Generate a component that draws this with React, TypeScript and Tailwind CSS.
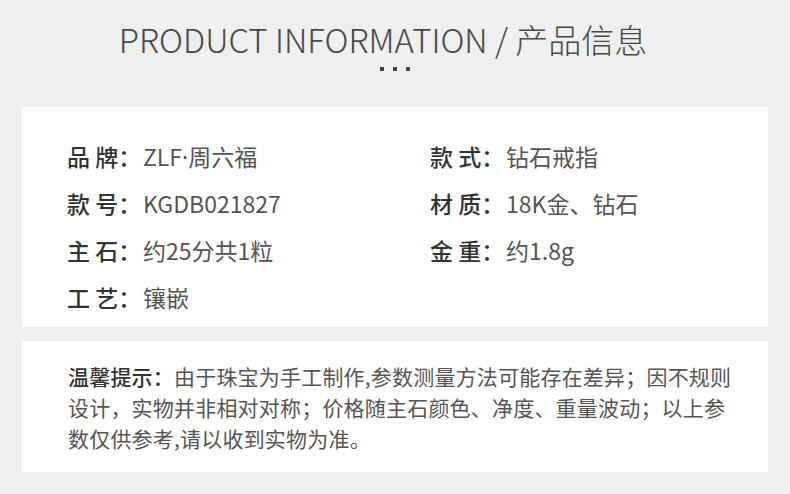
const specs = [
  [
    { label: "品 牌：", value: "ZLF·周六福" },
    { label: "款 式：", value: "钻石戒指" },
  ],
  [
    { label: "款 号：", value: "KGDB021827" },
    { label: "材 质：", value: "18K金、钻石" },
  ],
  [
    { label: "主 石：", value: "约25分共1粒" },
    { label: "金 重：", value: "约1.8g" },
  ],
  [{ label: "工 艺：", value: "镶嵌" }],
];

function Spec({ label, value }: { label: string; value: string }) {
  // the middle dot needs a Latin face, the CJK one draws it full width
  const parts = value.split("·");
  return (
    <div className="flex items-center h-[47px]">
      <span className="w-[76px] shrink-0 whitespace-pre font-medium text-[#333333]">{label}</span>
      <span className="text-[#555555]">
        {parts[0]}
        {parts.length > 1 && (
          <>
            <span style={{ fontFamily: '"Noto Sans", sans-serif' }}>·</span>
            {parts[1]}
          </>
        )}
      </span>
    </div>
  );
}

export default function App() {
  return (
    <div
      lang="zh-CN"
      className="w-[790px] h-[494px] bg-[#efefef] overflow-hidden"
      style={{ fontFamily: '"Noto Sans CJK SC", "Noto Sans", sans-serif' }}
    >
      {/* Heading */}
      <div className="pt-[17px] flex flex-col items-center">
        <h1 className="text-[33px] leading-[44px] font-light text-[#484848] pr-[24px]">
          PRODUCT INFORMATION / 产品信息
        </h1>
        <div className="flex gap-[9px] mt-[6px]">
          <span className="w-1 h-1 bg-[#444444]" />
          <span className="w-1 h-1 bg-[#444444]" />
          <span className="w-1 h-1 bg-[#444444]" />
        </div>
      </div>

      {/* Specs card */}
      <div className="mx-[22px] mt-[36px] bg-white pl-[45px] pt-[26px] pb-[6px] text-[23px]">
        {specs.map((row, i) => (
          <div key={i} className="grid grid-cols-[363px_1fr]">
            {row.map((s) => (
              <Spec key={s.label} label={s.label} value={s.value} />
            ))}
          </div>
        ))}
      </div>

      {/* Notice card */}
      <div className="mx-[22px] mt-[14px] bg-white pl-[46px] pt-[20px] pb-[18px]">
        <p className="whitespace-nowrap text-[21px] leading-[31px] tracking-[0.2px] text-[#555555] [text-spacing-trim:space-all]">
          <span className="font-medium text-[#333333]">温馨提示：</span>
          由于珠宝为手工制作,参数测量方法可能存在差异；因不规则
          <br />
          设计，实物并非相对对称；价格随主石颜色、净度、重量波动；以上参
          <br />
          数仅供参考,请以收到实物为准。
        </p>
      </div>
    </div>
  );
}
